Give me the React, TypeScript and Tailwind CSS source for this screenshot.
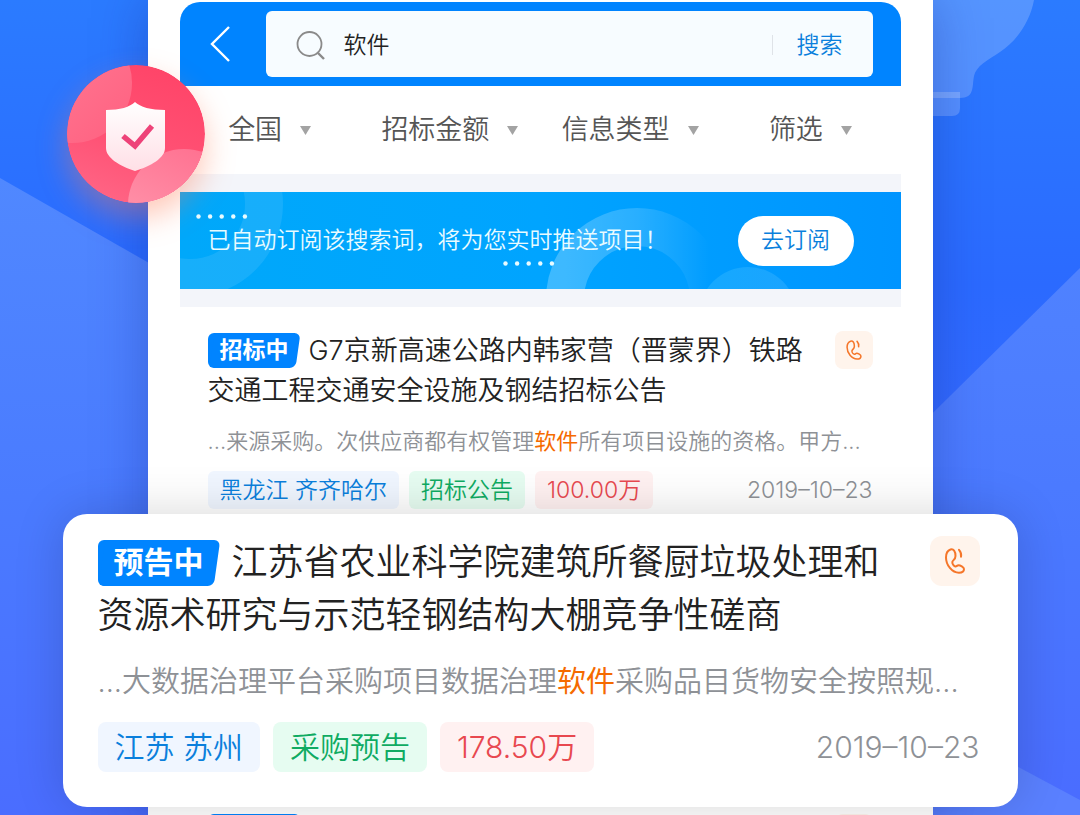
import clsx from "clsx";

type Bid = {
  status: string;
  title: string;
  before: string;
  keyword: string;
  after: string;
  area: string;
  kind: string;
  amount: string;
  date: string;
};

const filters = ["全国", "招标金额", "信息类型", "筛选"];

const bids: Bid[] = [
  {
    status: "招标中",
    title: "G7京新高速公路内韩家营（晋蒙界）铁路交通工程交通安全设施及钢结招标公告",
    before: "...来源采购。次供应商都有权管理",
    keyword: "软件",
    after: "所有项目设施的资格。甲方...",
    area: "黑龙江 齐齐哈尔",
    kind: "招标公告",
    amount: "100.00万",
    date: "2019–10–23",
  },
  {
    status: "预告中",
    title: "江苏省农业科学院建筑所餐厨垃圾处理和资源术研究与示范轻钢结构大棚竞争性磋商",
    before: "...大数据治理平台采购项目数据治理",
    keyword: "软件",
    after: "采购品目货物安全按照规...",
    area: "江苏 苏州",
    kind: "采购预告",
    amount: "178.50万",
    date: "2019–10–23",
  },
];

function Backdrop() {
  return (
    <svg
      aria-hidden="true"
      className="absolute inset-0 size-full"
      viewBox="0 0 1080 815"
      preserveAspectRatio="xMidYMid slice"
    >
      <defs>
        <linearGradient id="sky" x1="0" y1="0" x2="0" y2="1">
          <stop offset="0" stopColor="#2b7bff" />
          <stop offset="0.35" stopColor="#2b6aff" />
          <stop offset="1" stopColor="#4a68ff" />
        </linearGradient>
        <linearGradient id="slope" x1="0" y1="0" x2="0" y2="1">
          <stop offset="0" stopColor="#5088ff" />
          <stop offset="0.5" stopColor="#4a7bff" />
          <stop offset="1" stopColor="#4a6dff" />
        </linearGradient>
        <linearGradient id="slopeRight" x1="0" y1="0" x2="0" y2="1">
          <stop offset="0" stopColor="#4f82ff" />
          <stop offset="0.5" stopColor="#4a78ff" />
          <stop offset="1" stopColor="#4a6cff" />
        </linearGradient>
      </defs>
      <rect width="1080" height="815" fill="url(#sky)" />
      <path d="M0 178L540 486V815H0Z" fill="url(#slope)" />
      <path d="M1080 268L540 800V815H1080Z" fill="url(#slopeRight)" />
      <path d="M900 704L1080 800V815H900Z" fill="#5a80ff" />
      <path
        d="M900 0H1034C1030 22 1016 42 1000 52C988 60 976 66 974 76C972 86 975 98 960 98H900Z"
        fill="#fff"
        fillOpacity="0.2"
      />
      <path d="M900 92H960V108Q960 116 952 116H900Z" fill="#fff" fillOpacity="0.2" />
    </svg>
  );
}

function ShieldMark() {
  return (
    <svg
      aria-hidden="true"
      viewBox="0 0 138 138"
      className="absolute top-[65px] -left-[81px] z-10 size-[138px] rounded-full shadow-[0_14px_30px_rgba(255,120,80,0.4)]"
    >
      <defs>
        <linearGradient id="coral" x1="0.7" y1="0" x2="0.3" y2="1">
          <stop offset="0" stopColor="#ff4468" />
          <stop offset="0.6" stopColor="#ff5275" />
          <stop offset="1" stopColor="#ff6585" />
        </linearGradient>
        <linearGradient id="petal" x1="0" y1="0" x2="1" y2="1">
          <stop offset="0" stopColor="#ff8199" />
          <stop offset="1" stopColor="#ff6080" />
        </linearGradient>
        <linearGradient id="petalLow" x1="0.3" y1="1" x2="0.8" y2="0">
          <stop offset="0" stopColor="#ff9bb0" />
          <stop offset="1" stopColor="#ff6f8f" />
        </linearGradient>
        <linearGradient id="shield" x1="0" y1="0" x2="0" y2="1">
          <stop offset="0" stopColor="#fff" />
          <stop offset="1" stopColor="#ffdfe6" />
        </linearGradient>
        <clipPath id="disc">
          <circle cx="69" cy="69" r="69" />
        </clipPath>
      </defs>
      <g clipPath="url(#disc)">
        <rect width="138" height="138" fill="url(#coral)" />
        <circle cx="5" cy="18" r="60" fill="url(#petal)" />
        <circle cx="117" cy="140" r="56" fill="url(#petalLow)" />
      </g>
      <path
        d="M68 37C73 42 84 45 98 45V83C98 93 84 101 68 106C53 101 39 93 39 83V45C53 45 63 42 68 37Z"
        fill="url(#shield)"
      />
      <path d="M56 71L68 81L85 61" fill="none" stroke="#ee4278" strokeWidth="5.5" />
    </svg>
  );
}

function BannerArt() {
  return (
    <svg aria-hidden="true" viewBox="0 0 721 97" preserveAspectRatio="xMinYMin slice" className="absolute inset-0 size-full">
      <defs>
        <linearGradient id="arc" x1="0" y1="0" x2="1" y2="0">
          <stop offset="0" stopColor="#fff" stopOpacity="0.24" />
          <stop offset="0.5" stopColor="#fff" stopOpacity="0.16" />
          <stop offset="1" stopColor="#fff" stopOpacity="0" />
        </linearGradient>
        <linearGradient id="bubble" x1="0" y1="0" x2="1" y2="0">
          <stop offset="0" stopColor="#3cc0ff" stopOpacity="0.35" />
          <stop offset="1" stopColor="#4cb8ff" stopOpacity="0.35" />
        </linearGradient>
      </defs>
      <circle cx="10" cy="12" r="74" fill="none" stroke="#fff" strokeOpacity="0.09" strokeWidth="38" />
      <circle cx="457" cy="107" r="72" fill="none" stroke="url(#arc)" strokeWidth="38" />
      <circle cx="568" cy="124" r="49" fill="url(#bubble)" />
      {[0, 1, 2, 3, 4].map((i) => (
        <g key={i} fill="#e8fbff">
          <circle cx={18.5 + i * 11.6} cy="24.5" r="2.2" />
          <circle cx={325.5 + i * 11.6} cy="71.5" r="2.2" />
        </g>
      ))}
    </svg>
  );
}

function StatusBadge({ large, children }: { large?: boolean; children?: string }) {
  return (
    <span
      className={clsx(
        "relative isolate inline-flex items-center justify-center align-[2px] font-bold text-white",
        large ? "mr-3 h-[46px] w-[122px] text-[30px]" : "mr-2 h-[35px] w-[93px] text-[23px]",
      )}
    >
      <span className="absolute inset-y-0 left-0 -z-10 w-2/3 rounded-md bg-[#0084ff]" />
      <span className="absolute inset-y-0 right-[3px] left-1 -z-10 -skew-x-8 rounded-md bg-[#0084ff]" />
      {children}
    </span>
  );
}

function CallButton({ large }: { large?: boolean }) {
  return (
    <button
      type="button"
      aria-label="拨打电话"
      className={clsx(
        "flex shrink-0 items-center justify-center bg-[#fff4ec] text-[#f5762a]",
        large ? "size-[50px] rounded-xl" : "size-[38px] rounded-lg",
      )}
    >
      <svg
        viewBox="0 0 20 26"
        className={large ? "h-[26px] w-5" : "h-5 w-4"}
        fill="none"
        stroke="currentColor"
        strokeWidth="2"
        strokeLinecap="round"
        strokeLinejoin="round"
      >
        <path d="M5.5 1.5C2.5 2.5 1 6 1 9.5C1 17 7 24.8 14 24.8C18 24.8 19 22.5 19 21C19 19 15 17.2 13.5 17.2C12 17.2 11.5 19 10 18.4C8 17.5 7 15 7.5 13.5C8 12 10.5 11.5 10.5 8C10.5 3 8.5 0.7 5.5 1.5Z" />
        <path d="M14 1.8C16 4 16.6 6 16 8.8" />
      </svg>
    </button>
  );
}

function BidArticle({ bid, large }: { bid: Bid; large?: boolean }) {
  const tag = large ? "rounded-lg px-[17px]" : "rounded-md px-3";

  return (
    <article
      className={clsx(
        "font-[350]",
        large
          ? "relative z-10 -mx-[85px] rounded-3xl bg-white pt-[22px] pr-[38px] pb-[35px] pl-[35px] shadow-[0_0_50px_rgba(0,0,0,0.16)]"
          : "mx-8 px-7 pt-6 pb-[5px]",
      )}
    >
      <div className={clsx("flex items-start justify-between", large ? "gap-6" : "gap-4")}>
        <h2 className={clsx("text-[#222]", large ? "text-[36px] leading-[53px]" : "text-[27px] leading-10")}>
          <StatusBadge large={large}>{bid.status}</StatusBadge>
          {bid.title}
        </h2>
        <CallButton large={large} />
      </div>
      <p
        className={clsx(
          "whitespace-nowrap text-[#8e9196]",
          large ? "mt-5 text-[29px] leading-10" : "mt-[15px] text-[22px] leading-[30px]",
        )}
      >
        {bid.before}
        <span className="font-normal text-[#f56a00]">{bid.keyword}</span>
        {bid.after}
      </p>
      <div
        className={clsx(
          "flex items-center",
          large ? "mt-5 h-[50px] gap-[13px] text-[30px]" : "mt-[15px] h-[38px] gap-[10px] text-[23px]",
        )}
      >
        <span className={clsx("flex h-full items-center bg-[#f0f6ff] text-[#0a7fdc]", tag)}>{bid.area}</span>
        <span className={clsx("flex h-full items-center bg-[#e6fcf1] text-[#0fab62]", tag)}>{bid.kind}</span>
        <span className={clsx("flex h-full items-center bg-[#fff1f1] text-[#e8484f]", tag)}>{bid.amount}</span>
        <time dateTime="2019-10-23" className="ml-auto text-[#8e9196]">
          {bid.date}
        </time>
      </div>
    </article>
  );
}

export default function App() {
  return (
    <div className="relative h-screen overflow-hidden bg-[#2b6aff] font-['Inter','Noto_Sans_CJK_SC',sans-serif]">
      <Backdrop />
      <main className="relative mx-auto h-full w-[785px] max-w-full bg-white pt-0.5 shadow-[0_0_50px_rgba(20,40,140,0.35)]">
        <ShieldMark />

        <div className="mx-8">
          <header className="flex h-[84px] items-center rounded-t-[20px] bg-[#0084ff] pr-7 pl-[30px]">
            <button type="button" aria-label="返回" className="text-white">
              <svg viewBox="0 0 20 36" className="h-9 w-5" fill="none" stroke="currentColor" strokeWidth="2.4">
                <path d="M19 1L2 18L19 35" />
              </svg>
            </button>
            <form className="ml-9 flex h-[66px] flex-1 items-center rounded-md bg-[#f7fcff] px-[30px] pt-0.5 font-[350]">
              <svg viewBox="0 0 30 30" className="size-[30px]" fill="none" stroke="#8a8a8a" strokeWidth="1.8">
                <circle cx="13.5" cy="14" r="12" />
                <path d="M22 23L28 29" strokeWidth="2.4" />
              </svg>
              <input
                type="text"
                aria-label="搜索词"
                defaultValue="软件"
                className="ml-[18px] min-w-0 flex-1 bg-transparent text-[23px] text-[#222] outline-none"
              />
              <span className="h-5 w-px bg-[#dfe3e8]" />
              <button type="button" className="ml-6 text-[23px] text-[#0a7fdc]">
                搜索
              </button>
            </form>
          </header>

          <nav className="grid h-[88px] grid-cols-4 items-center">
            {filters.map((name) => (
              <label key={name} className="flex items-center justify-center gap-[18px]">
                <select
                  aria-label={name}
                  className="appearance-none bg-transparent text-[27px] font-[350] text-[#555] outline-none"
                >
                  <option>{name}</option>
                </select>
                <svg viewBox="0 0 11 9" className="h-[9px] w-[11px]" fill="#a3a3a3">
                  <path d="M0 0H11L5.5 9Z" />
                </svg>
              </label>
            ))}
          </nav>

          <section className="border-y-18 border-[#f3f5fa]">
            <div className="relative flex h-[97px] items-center justify-between bg-linear-to-r from-[#00a8fa] via-[#00a4ff] to-[#0094ff] pr-[47px] pl-7 font-[350]">
              <BannerArt />
              <p className="relative text-[23px] text-[#e9fbff]">已自动订阅该搜索词，将为您实时推送项目！</p>
              <button
                type="button"
                className="relative h-[50px] w-[116px] rounded-full bg-white text-[23px] text-[#0a7fdc]"
              >
                去订阅
              </button>
            </div>
          </section>
        </div>

        <BidArticle bid={bids[0]} />
        <BidArticle bid={bids[1]} large />

        <div className="mx-8 flex items-start justify-between px-7 pt-[7px]">
          <StatusBadge />
          <CallButton />
        </div>
      </main>
    </div>
  );
}
